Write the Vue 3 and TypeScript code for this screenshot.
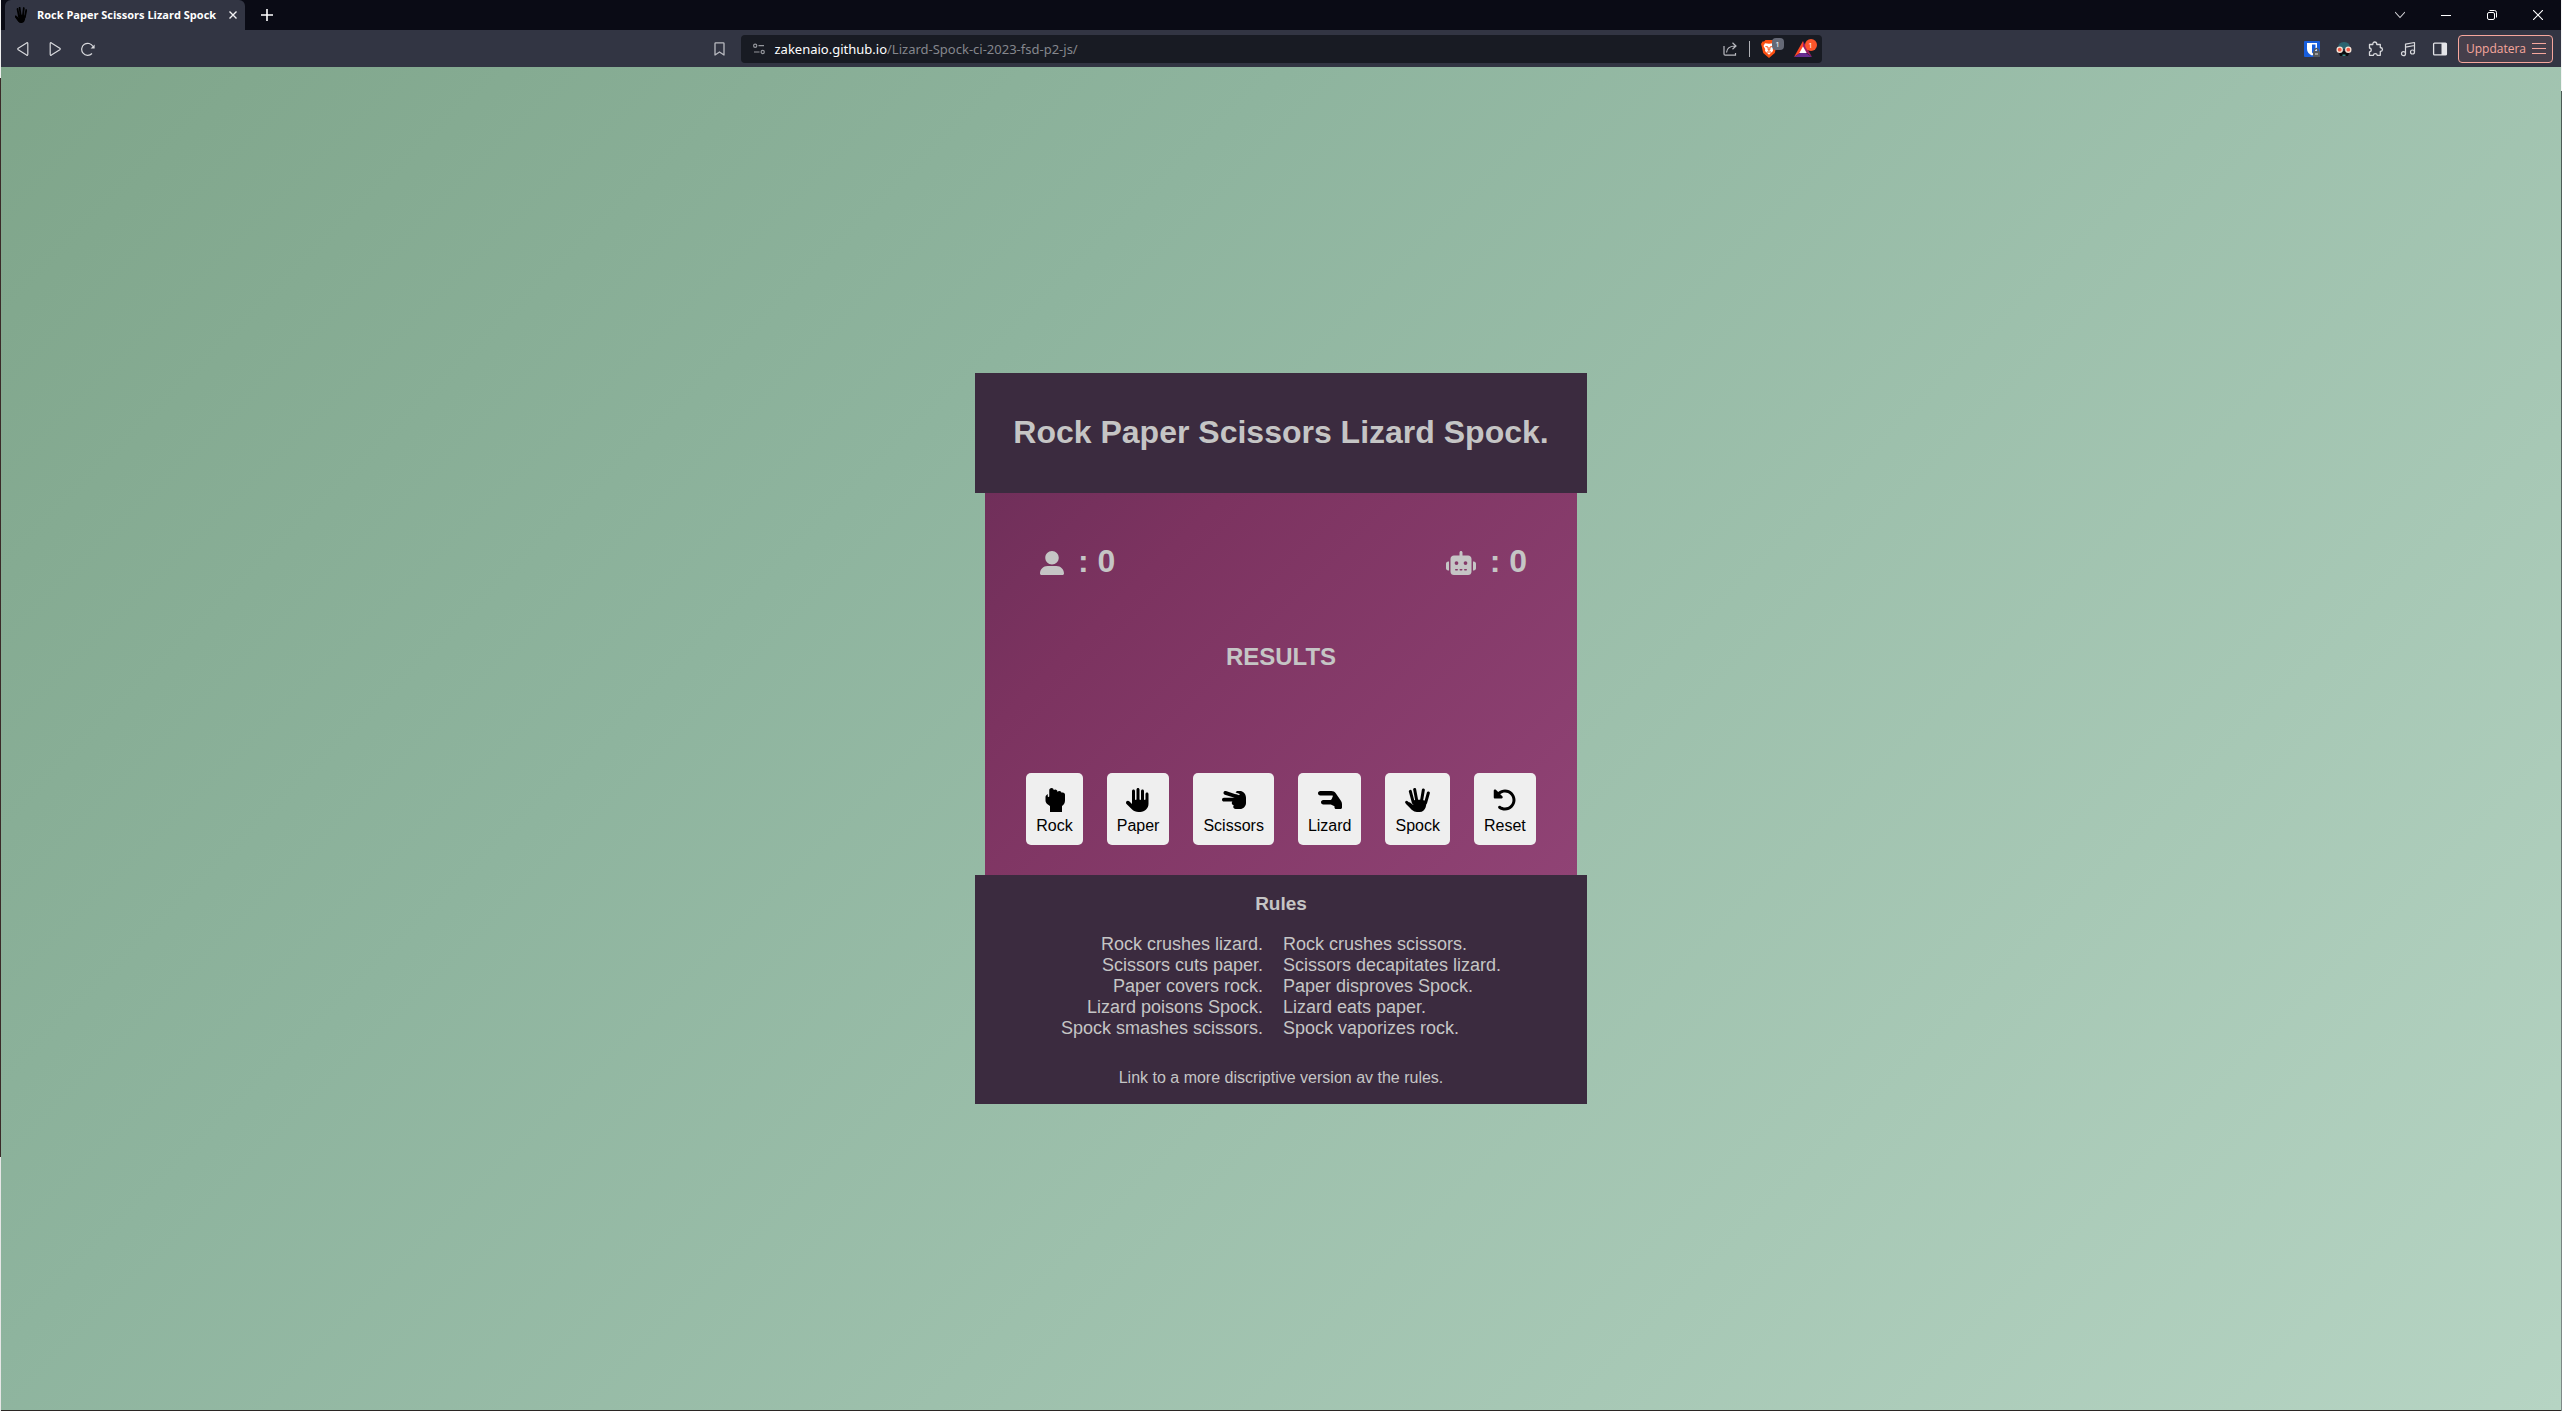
<script setup lang="ts">
import { computed, ref } from 'vue'

interface Choice {
  name: string
  viewBox: string
  width: number
  path: string
}

const spockFingers = 'M5 43 24 60M16 10 25 44M29 4.500 36 42M55 6 49 42M70 15 62 44'
const spockPalm = 'M21 38 34 35H50L66 40 62 58Q57 72 44 72H36Q28 72 20 65L3 47 14 43 25 51Z'

const choices: Choice[] = [
  {
    name: 'Rock',
    viewBox: '0 0 448 512',
    width: 21,
    path: 'M448 144v120.4C448 314.2 422.6 358.1 384 384v128H128v-128l-53.19-38.67C48 325.8 32 294.3 32 261.2V192c0-14.58 6.625-28.38 17.1-37.48L80 130.5V176C80 184.8 87.16 192 96 192s16-7.164 16-16v-128C112 21.48 133.5 0 160 0c25.38 0 45.96 19.77 47.67 44.73C216.2 36.9 227.5 32 240 32C266.5 32 288 53.48 288 80v5.531C296.6 72.57 311.3 64 328 64c23.47 0 42.94 16.87 47.11 39.14C382.4 98.7 390.9 96 400 96C426.5 96 448 117.5 448 144z',
  },
  {
    name: 'Paper',
    viewBox: '0 0 512 512',
    width: 24,
    path: 'M480 128v208c0 97.05-78.95 176-176 176h-37.72c-53.42 0-103.7-20.8-141.4-58.58l-113.1-113.1C3.906 332.5 0 322.2 0 312C0 290.7 17.15 272 40 272c10.23 0 20.47 3.906 28.28 11.72L128 343.4V64c0-17.67 14.33-32 32-32s32 14.33 32 32l.0729 176C192.1 248.8 199.2 256 208 256s16.07-7.164 16.07-16L224 32c0-17.67 14.33-32 32-32s32 14.33 32 32l.0484 208c0 8.836 7.111 16 15.95 16S320 248.8 320 240L320 64c0-17.67 14.33-32 32-32s32 14.33 32 32l.0729 176C384.1 248.8 391.2 256 400 256S416 248.8 416 240V128c0-17.67 14.33-32 32-32S480 110.3 480 128z',
  },
  {
    name: 'Scissors',
    viewBox: '0 0 512 512',
    width: 24,
    path: 'M40 208C17.9 208 0 225.9 0 248s17.9 40 40 40l180.2 0c-7.7 8.5-12.2 19.7-12.2 32c0 25.3 19.5 46 44.3 47.9c-7.7 8.5-12.3 19.8-12.3 32.1c0 26.5 21.500 48 48 48l32 0 64 0c70.7 0 128-57.3 128-128l0-113.1c0-40.2-16-78.8-44.4-107.3C444.8 76.8 413.9 64 381.7 64L336 64c-21.3 0-39.3 13.9-45.6 33.1l74.5 23.7c8.4 2.7 13.1 11.7 10.4 20.1s-11.7 13.1-20.1 10.4L288 130.6l0 .1L84 65.8C62.9 59 40.4 70.7 33.7 91.8s5 43.6 26 50.2L269.5 208 40 208z',
  },
  {
    name: 'Lizard',
    viewBox: '0 0 512 512',
    width: 24,
    path: 'M0 112C0 85.5 21.5 64 48 64H286.5c36.8 0 71.2 18 92.1 48.2l113.5 164c13 18.7 19.9 41 19.9 63.8V416c0 17.700-14.3 32-32 32H384c-17.700 0-32-14.3-32-32V389.8L273.900 352H112c-26.500 0-48-21.500-48-48s21.500-48 48-48H256c18 0 33-10 39-26l21-54c4-10-2-16-12-16H48C21.500 160 0 138.500 0 112z',
  },
  { name: 'Spock', viewBox: '0 0 75 72', width: 25, path: spockPalm },
  {
    name: 'Reset',
    viewBox: '0 0 512 512',
    width: 24,
    path: 'M480 256c0 123.4-100.5 223.9-223.9 223.9c-48.84 0-95.17-15.58-134.2-44.86c-14.12-10.59-16.97-30.66-6.375-44.81c10.59-14.12 30.62-16.94 44.81-6.375c27.84 20.91 61 31.94 95.88 31.94C344.3 415.8 416 344.1 416 256s-71.69-159.8-159.8-159.8c-37.46 0-73.09 13.49-101.3 36.64l45.12 45.14c17.01 17.02 4.955 46.1-19.1 46.1H35.17C24.58 224.1 16 215.5 16 204.9V59.04c0-24.04 29.07-36.08 46.07-19.07l47.6 47.63C149.9 52.71 201.5 32.11 256.1 32.11C379.5 32.11 480 132.6 480 256z',
  },
]

const beats: Record<string, string[]> = {
  Rock: ['Lizard', 'Scissors'],
  Paper: ['Rock', 'Spock'],
  Scissors: ['Paper', 'Lizard'],
  Lizard: ['Spock', 'Paper'],
  Spock: ['Scissors', 'Rock'],
}

const rulesLeft = [
  'Rock crushes lizard.',
  'Scissors cuts paper.',
  'Paper covers rock.',
  'Lizard poisons Spock.',
  'Spock smashes scissors.',
]
const rulesRight = [
  'Rock crushes scissors.',
  'Scissors decapitates lizard.',
  'Paper disproves Spock.',
  'Lizard eats paper.',
  'Spock vaporizes rock.',
]

const player = ref(0)
const computer = ref(0)
const outcome = ref('')
const resultText = computed(() => outcome.value || 'RESULTS')

function play(name: string): void {
  if (name === 'Reset') {
    player.value = 0
    computer.value = 0
    outcome.value = ''
    return
  }
  const hands = Object.keys(beats)
  const other = hands[Math.floor(Math.random() * hands.length)]
  if (other === name) {
    outcome.value = 'DRAW'
  } else if (beats[name].includes(other)) {
    player.value++
    outcome.value = 'YOU WIN'
  } else {
    computer.value++
    outcome.value = 'YOU LOSE'
  }
}
</script>

<template>
  <div class="frame">
    <div class="edge edge-left"></div>
    <div class="window">
      <header class="titlebar">
        <div class="tab">
          <svg class="favicon" width="12" height="16" viewBox="0 0 75 72" preserveAspectRatio="none">
            <path :d="spockPalm" />
            <path :d="spockFingers" fill="none" stroke="#000" stroke-width="11" stroke-linecap="round" />
          </svg>
          <span class="tab-title">Rock Paper Scissors Lizard Spock</span>
          <button class="icon-btn" aria-label="Close tab">
            <svg width="8" height="8" viewBox="0 0 8 8" fill="none" stroke="#f2f2f4" stroke-width="1.400"><path d="M.5.5l7 7M7.500.5l-7 7" /></svg>
          </button>
        </div>
        <button class="icon-btn new-tab" aria-label="New tab">
          <svg width="12" height="12" viewBox="0 0 12 12" fill="none" stroke="#fff" stroke-width="1.600"><path d="M6 0v12M0 6h12" /></svg>
        </button>
        <div class="window-controls">
          <button class="icon-btn" aria-label="Search tabs">
            <svg width="10" height="10" viewBox="0 0 10 10" fill="none" stroke="#d4d4d8" stroke-width="1.100"><path d="M0 2l5 5.500L10 2" /></svg>
          </button>
          <button class="icon-btn" aria-label="Minimize">
            <svg width="10" height="10" viewBox="0 0 10 10" fill="none" stroke="#fff"><path d="M0 5.500h10" /></svg>
          </button>
          <button class="icon-btn" aria-label="Restore">
            <svg width="10" height="10" viewBox="0 0 10 10" fill="none" stroke="#fff"><rect x=".5" y="2.500" width="7" height="7" rx="1.500" /><path d="M2.500.5H7.500Q9.500.5 9.500 2.500V7.500" /></svg>
          </button>
          <button class="icon-btn" aria-label="Close">
            <svg width="10" height="10" viewBox="0 0 10 10" fill="none" stroke="#fff" stroke-width="1.100"><path d="M0 0l10 10M10 0L0 10" /></svg>
          </button>
        </div>
      </header>

      <nav class="toolbar">
        <div class="nav-side">
          <div class="nav-buttons">
            <button class="icon-btn" aria-label="Back">
              <svg width="12" height="14" viewBox="0 0 12 14" fill="none" stroke="#d8d9dd" stroke-width="1.200" stroke-linejoin="round"><path d="M9.600.9Q10.800.300 10.800 1.700V12.300Q10.800 13.700 9.600 13.100L1.200 7.700Q.300 7 1.200 6.300Z" /></svg>
            </button>
            <button class="icon-btn" aria-label="Forward">
              <svg width="12" height="14" viewBox="0 0 12 14" fill="none" stroke="#d8d9dd" stroke-width="1.200" stroke-linejoin="round"><path d="M2.400.9Q1.200.300 1.200 1.700V12.300Q1.200 13.700 2.400 13.100L10.800 7.700Q11.700 7 10.800 6.300Z" /></svg>
            </button>
            <button class="icon-btn" aria-label="Reload">
              <svg width="14" height="14" viewBox="0 0 14 14" fill="none" stroke="#d8d9dd" stroke-width="1.200"><path d="M11 11.500A6 6 0 1 1 12 4.500" /><path d="M13.600 2.500V6.500H9.600Z" fill="#d8d9dd" stroke="none" /></svg>
            </button>
          </div>
          <button class="icon-btn bookmark" aria-label="Bookmark">
            <svg width="11" height="14" viewBox="0 0 11 14" fill="none" stroke="#b9bac0" stroke-width="1.300" stroke-linejoin="round"><path d="M1.700.8H9.300Q10 .8 10 1.500V13L5.500 10 1 13V1.500Q1 .8 1.700.8Z" /></svg>
          </button>
        </div>

        <div class="address">
          <svg width="12" height="12" viewBox="0 0 12 12" fill="none" stroke="#94969c" stroke-width="1.200"><circle cx="2.200" cy="2.700" r="1.600" /><path d="M5.500 2.700H11M1 9h5.500" /><circle cx="9.700" cy="9" r="1.600" /></svg>
          <a class="url" href="#"><span class="host">zakenaio.github.io</span>/Lizard-Spock-ci-2023-fsd-p2-js/</a>
          <svg class="share" width="14" height="14" viewBox="0 0 14 14" fill="none" stroke="#b9bac0" stroke-width="1.200"><path d="M1 4V12Q1 13.200 2.200 13.200H12.500V11M3.500 10.500Q4 4 12.500 4M9.500.8 13 4 9.500 7.300" /></svg>
          <span class="divider"></span>
          <span class="shield">
            <svg width="16" height="18" viewBox="0 0 16 18"><path d="M4.500 0H11.500L13 1.600 14.500 1.500 16 4 15.400 6 13.800 13 8 18 2.200 13 .6 6 0 4 1.500 1.500 3 1.600Z" fill="#fb4f12" /><path d="M4 3.200 8 3.800 12 3.200 13.500 6 11.800 9 12 11 8 14.800 4 11 4.200 9 2.500 6Z" fill="#fff" /><path d="M4.500 6.500 7 7 7.300 10 8 10.700 8.700 10 9 7 11.500 6.500M6 12H10" stroke="#fb4f12" stroke-width="1" fill="none" /></svg>
            <span class="badge grey">1</span>
          </span>
          <span class="shield">
            <svg width="18" height="16" viewBox="0 0 18 16"><path d="M9 0 0 16 9 10Z" fill="#ff4724" /><path d="M9 0 18 16 9 9Z" fill="#9e1f63" /><path d="M0 16H18L9 10Z" fill="#662d91" /><path d="M9 5.500 12.700 12H5.300Z" fill="#fff" /></svg>
            <span class="badge orange">1</span>
          </span>
        </div>

        <div class="extensions">
          <svg width="16" height="16" viewBox="0 0 16 16"><rect width="16" height="16" rx="1" fill="#175ddc" /><path d="M3 2H13V8Q13 12 8 14.500 3 12 3 8Z" fill="#fff" /><path d="M8 3.500H11.500V8Q11 10.500 8 12.500Z" fill="#175ddc" /><path d="M10.500 10V9Q12.500 6 14.500 9V10" stroke="#55585c" stroke-width="1.400" fill="none" /><rect x="9" y="10" width="7" height="6" rx="1" fill="#55585c" /><path d="M11 13H14" stroke="#ddd" /></svg>
          <svg width="16" height="16" viewBox="0 0 16 16"><path d="M2 7Q2 1 8 1T14 7V8H2Z" fill="#2b6470" /><path d="M2 10H14L12 15H4Z" fill="#0c0d10" /><circle cx="3.700" cy="8.700" r="3.200" fill="#f6e3d6" /><circle cx="12.300" cy="8.700" r="3.200" fill="#f6e3d6" /><circle cx="3.700" cy="8.700" r="1.900" fill="#ef5a45" /><circle cx="12.300" cy="8.700" r="1.900" fill="#ef5a45" /><path d="M6.500 15V13.500H9.500V15" fill="#3a8a84" /></svg>
          <svg width="16" height="16" viewBox="0 0 16 16" fill="none" stroke="#d8d9dd" stroke-width="1.300" stroke-linejoin="round"><path d="M1.500 3.500H4.800Q4.800 1 6.800 1T8.800 3.500H12.300V6.500Q14.500 6.800 14.500 8.500T12.300 10.500V14.300H9.300Q9 12.600 7.300 12.600T5.300 14.300H1.500V10.800Q3.300 10.500 3.300 8.900T1.500 7Z" /></svg>
          <svg width="16" height="16" viewBox="0 0 16 16" fill="none" stroke="#d8d9dd" stroke-width="1.200" stroke-linejoin="round"><circle cx="3.500" cy="12.700" r="2" /><circle cx="12.500" cy="11" r="2" /><path d="M5.500 12.700V3.200L14.500 1.500V11M5.500 6.200 14.500 4.500" /></svg>
          <svg width="16" height="16" viewBox="0 0 16 16"><rect x="1.600" y="2.100" width="12.800" height="11.800" rx="1" fill="none" stroke="#e4e4e8" stroke-width="1.300" /><path d="M9.500 2H14.500V14H9.500Z" fill="#e4e4e8" /></svg>
          <button class="update">
            Uppdatera
            <svg width="14" height="11" viewBox="0 0 14 11" stroke="#f7a79d" fill="none"><path d="M0 .5H14M0 5.500H14M0 10.500H14" /></svg>
          </button>
        </div>
      </nav>

      <main class="page">
        <article class="game">
          <header class="game-title"><h1>Rock Paper Scissors Lizard Spock.</h1></header>
          <section class="board">
            <div class="scores">
              <div class="score">
                <svg width="24" height="24" viewBox="0 0 512 512" role="img" aria-label="Player"><path d="M256 288c79.53 0 144-64.47 144-144s-64.470-144-144-144S112 64.470 112 144 176.500 288 256 288zM351.100 320H160c-88.360 0-160 71.630-160 160c0 17.670 14.330 32 32 32H480c17.670 0 32-14.330 32-32C512 391.600 440.400 320 351.100 320z" /></svg>
                <span>: {{ player }}</span>
              </div>
              <div class="score">
                <svg width="30" height="24" viewBox="0 0 640 512" role="img" aria-label="Computer"><path fill-rule="evenodd" d="M320 0c17.700 0 32 14.300 32 32V96H472c39.800 0 72 32.200 72 72V440c0 39.800-32.200 72-72 72H168c-39.800 0-72-32.200-72-72V168c0-39.800 32.200-72 72-72H288V32c0-17.700 14.300-32 32-32zM208 384c-8.800 0-16 7.200-16 16s7.200 16 16 16h32c8.800 0 16-7.200 16-16s-7.200-16-16-16H208zm96 0c-8.800 0-16 7.200-16 16s7.200 16 16 16h32c8.800 0 16-7.200 16-16s-7.200-16-16-16H304zm96 0c-8.800 0-16 7.200-16 16s7.200 16 16 16h32c8.800 0 16-7.200 16-16s-7.200-16-16-16H400zM264 256a40 40 0 1 0 -80 0 40 40 0 1 0 80 0zm152 40a40 40 0 1 0 0-80 40 40 0 1 0 0 80zM48 224H64V416H48c-26.500 0-48-21.500-48-48V272c0-26.500 21.500-48 48-48zm544 0c26.500 0 48 21.500 48 48v96c0 26.500-21.500 48-48 48H576V224h16z" /></svg>
                <span>: {{ computer }}</span>
              </div>
            </div>
            <h2>{{ resultText }}</h2>
            <div class="choices">
              <button v-for="c in choices" :key="c.name" class="choice" @click="play(c.name)">
                <svg :width="c.width" height="24" :viewBox="c.viewBox">
                  <path :d="c.path" />
                  <path v-if="c.name === 'Spock'" :d="spockFingers" fill="none" stroke="#000" stroke-width="9" stroke-linecap="round" />
                </svg>
                {{ c.name }}
              </button>
            </div>
          </section>
          <footer class="rules">
            <h3>Rules</h3>
            <div class="rule-columns">
              <ul class="wins-left"><li v-for="r in rulesLeft" :key="r">{{ r }}</li></ul>
              <ul><li v-for="r in rulesRight" :key="r">{{ r }}</li></ul>
            </div>
            <a href="#">Link to a more discriptive version av the rules.</a>
          </footer>
        </article>
      </main>
    </div>
    <div class="edge edge-right"></div>
  </div>
</template>

<style>
body {
  margin: 0;
}
</style>

<style scoped>
.frame {
  display: grid;
  grid-template-columns: 1px minmax(0, 1fr) 1px;
  min-height: 100vh;
  font-family: "Liberation Sans", Arial, sans-serif;
}
.edge-left {
  background: linear-gradient(#f0f0f0 78px, #3a2a28 78px, #3a2a28 82%, #e6e6e6 82%);
}
.edge-right {
  background: linear-gradient(#f4f4f4 91px, #4b5a55 91px, #7f8a88);
}
.window {
  display: flex;
  flex-direction: column;
  box-sizing: border-box;
  border-bottom: 1px solid #2b2724;
}
.icon-btn {
  display: flex;
  align-items: center;
  justify-content: center;
  padding: 0;
  border: 0;
  background: none;
}
svg {
  display: block;
  flex: none;
}
.titlebar {
  display: flex;
  align-items: center;
  height: 30px;
  background: #0a0b15;
}
.tab {
  display: flex;
  align-items: center;
  align-self: stretch;
  box-sizing: border-box;
  width: 240px;
  margin-left: 4px;
  padding: 0 8px 0 10px;
  border-radius: 6px 6px 0 0;
  background: #323543;
}
.tab-title {
  flex: 1;
  margin-left: 10px;
  color: #fff;
  font: 700 11px/16px "Open Sans", sans-serif;
  white-space: nowrap;
}
.new-tab {
  margin-left: 16px;
}
.window-controls {
  display: flex;
  gap: 36px;
  margin-left: auto;
  padding-right: 18px;
}
.toolbar {
  display: grid;
  grid-template-columns: 1fr minmax(0, 1081px) 1fr;
  align-items: center;
  height: 37px;
  background: #323543;
}
.nav-side {
  display: flex;
  align-items: center;
  justify-content: space-between;
  padding: 0 16px;
}
.nav-buttons {
  display: flex;
  gap: 20px;
}
.address {
  display: flex;
  align-items: center;
  box-sizing: border-box;
  height: 28px;
  padding: 0 8px 0 12px;
  border-radius: 4px;
  background: #181b23;
}
.url {
  flex: 1;
  margin-left: 10px;
  color: #85878d;
  font: 13px/16px "Noto Sans", sans-serif;
  text-decoration: none;
  white-space: nowrap;
}
.host {
  color: #fff;
}
.divider {
  width: 1px;
  height: 16px;
  margin: 0 11px 0 12px;
  background: #b0b1b6;
}
.shield {
  position: relative;
  width: 18px;
  margin-right: 10px;
}
.shield + .shield {
  margin: 0 2px 0 5px;
}
.badge {
  position: absolute;
  top: -2px;
  left: 11px;
  width: 12px;
  height: 12px;
  border-radius: 4px;
  color: #fff;
  font: 8px/12px "Open Sans", sans-serif;
  text-align: center;
}
.grey {
  background: #656976;
}
.orange {
  border-radius: 6px;
  background: #fb542b;
}
.extensions {
  display: flex;
  align-items: center;
  justify-content: flex-end;
  gap: 16px;
  padding-right: 8px;
}
.update {
  display: flex;
  align-items: center;
  justify-content: space-between;
  box-sizing: border-box;
  width: 95px;
  height: 28px;
  margin-left: -6px;
  padding: 0 6px 0 7px;
  border: 1px solid #f7a79d;
  border-radius: 4px;
  background: #463f4b;
  color: #f7a79d;
  font: 12px/16px "Open Sans", sans-serif;
}
.page {
  display: flex;
  flex: 1;
  align-items: center;
  justify-content: center;
  background: linear-gradient(135deg, #7fa58a, #8eb49e 33%, #b6d4c3);
}
.game {
  width: 612px;
  max-width: 100%;
  color: #c5c5c5;
  text-align: center;
}
.game-title,
.rules {
  background: #3b2b3f;
}
.game-title {
  padding: 39px 0 41px;
}
h1,
h2,
h3 {
  margin: 0;
}
h1 {
  font-size: 32px;
  line-height: 40px;
}
.board {
  margin: 0 10px;
  padding: 48px 0 30px;
  background: linear-gradient(135deg, #702f5a, #7c3360 25%, #904375);
}
.scores {
  display: flex;
  justify-content: space-between;
  padding: 0 50px 0 55px;
}
.score {
  display: flex;
  align-items: center;
  gap: 14px;
  font-size: 32px;
  font-weight: 700;
  line-height: 40px;
}
.score svg {
  margin-top: 4px;
  fill: #c5c5c5;
}
h2 {
  margin: 62px 0 102px;
  font-size: 24px;
  line-height: 28px;
}
.choices {
  display: flex;
  justify-content: center;
  gap: 24px;
}
.choice {
  display: flex;
  flex-direction: column;
  align-items: center;
  gap: 5px;
  padding: 15px 10px 10px;
  border: 0;
  border-radius: 5px;
  background: #efefef;
  color: #000;
  font: 16px/18px "Liberation Sans", Arial, sans-serif;
}
.rules {
  padding: 18px 0 17px;
}
h3 {
  font-size: 19px;
  line-height: 22px;
}
.rule-columns {
  display: flex;
  justify-content: center;
  gap: 20px;
  margin: 19px 0 30px;
  font-size: 18px;
  line-height: 21px;
}
ul {
  margin: 0;
  padding: 0;
  list-style: none;
  text-align: left;
}
.wins-left {
  text-align: right;
}
.rules a {
  display: block;
  color: inherit;
  font-size: 16px;
  line-height: 18px;
  text-decoration: none;
}
</style>
